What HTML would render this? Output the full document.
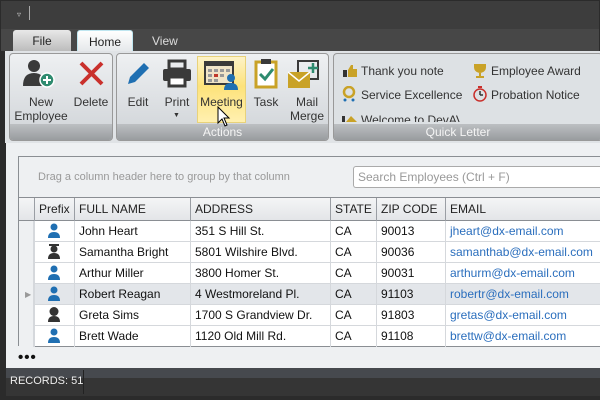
<!DOCTYPE html><html><head><style>
*{margin:0;padding:0;box-sizing:border-box}
body{width:600px;height:400px;overflow:hidden;background:#2b2b2b;font-family:"Liberation Sans",sans-serif;position:relative}
.a{position:absolute}
.t{font-size:12px;color:#222;white-space:nowrap}
.lbl{position:absolute;font-size:12px;color:#333;text-align:center;line-height:14px}
.row{position:absolute;left:19px;width:581px;height:21px;border-bottom:1px solid #d5d8dc;background:#fff;font-size:12px;color:#111}
.row div{position:absolute;top:0;height:21px;line-height:21px;border-left:1px solid #d5d8dc;padding-left:4px;white-space:nowrap}
.hd div{position:absolute;top:0;height:23px;line-height:23px;border-left:1px solid #9a9ea4;padding-left:4px;font-size:12px;color:#222}
.em{color:#2a6ebd}
</style></head><body>
<div class="a" style="left:1px;top:1px;width:598px;height:28px;background:#3d3d3d"></div>
<div class="a" style="left:17px;top:10px;color:#ccc;font-size:8px">▿</div>
<div class="a" style="left:29px;top:6px;width:1px;height:14px;background:#aaa"></div>
<div class="a" style="left:1px;top:29px;width:598px;height:22px;background:#474747"></div>
<div class="a" style="left:13px;top:30px;width:58px;height:21px;background:linear-gradient(#e8e8e8,#bcbcbc);border-radius:3px 3px 0 0;text-align:center;font-size:12px;line-height:22px;color:#222">File</div>
<div class="a" style="left:77px;top:30px;width:56px;height:22px;background:linear-gradient(#fff,#e4e7ea);border:1px solid #bfe6f0;border-bottom:none;border-radius:3px 3px 0 0;text-align:center;font-size:12px;line-height:22px;color:#222">Home</div>
<div class="a" style="left:152px;top:34px;font-size:12px;color:#ddd">View</div>
<div class="a" style="left:5px;top:51px;width:595px;height:92px;background:#e0e3e6"></div>
<div class="a" style="left:9px;top:53px;width:104px;height:88px;border:1px solid #999;border-radius:4px;background:linear-gradient(#eef0f2,#cfd3d7);overflow:hidden"><div class="a" style="left:0;bottom:0;width:100%;height:16px;background:linear-gradient(#bcbfc2,#999c9f)"></div></div>
<div class="a" style="left:116px;top:53px;width:213px;height:88px;border:1px solid #999;border-radius:4px;background:linear-gradient(#eef0f2,#cfd3d7);overflow:hidden"><div class="a" style="left:0;bottom:0;width:100%;height:16px;background:linear-gradient(#bcbfc2,#999c9f);color:#f4f4f4;font-size:12px;text-align:center;line-height:16px">Actions</div></div>
<div class="a" style="left:333px;top:53px;width:270px;height:88px;border:1px solid #999;border-radius:4px;background:#dde1e4;overflow:hidden"><div class="a" style="left:0;bottom:0;width:100%;height:16px;background:linear-gradient(#bcbfc2,#999c9f);color:#f4f4f4;font-size:12px;text-align:center;line-height:16px;padding-right:20px">Quick Letter</div></div>
<div class="a" style="left:197px;top:56px;width:49px;height:67px;border:1px solid #e8d27a;background:linear-gradient(#fdf3c8,#fde27a 45%,#fff0b0)"></div>
<svg class="a" style="left:20px;top:58px" width="40" height="32"><circle cx="14" cy="8" r="6" fill="#3a3a3a"/><path d="M3 28 Q3 15 14 15 Q25 15 25 28Z" fill="#3a3a3a"/><circle cx="27" cy="22" r="7" fill="#2e8b6f" stroke="#fff" stroke-width="1.5"/><path d="M27 18v8M23 22h8" stroke="#fff" stroke-width="2"/></svg>
<svg class="a" style="left:78px;top:60px" width="28" height="28"><path d="M3 3L24 24M24 3L3 24" stroke="#c9302c" stroke-width="4"/></svg>
<svg class="a" style="left:124px;top:60px" width="28" height="28"><path d="M4 24L6 17L20 3L25 8L11 22Z" fill="#1f6fb2"/></svg>
<svg class="a" style="left:162px;top:59px" width="30" height="30"><rect x="7" y="2" width="16" height="8" fill="none" stroke="#3a3a3a" stroke-width="3"/><rect x="1" y="10" width="28" height="12" rx="2" fill="#3a3a3a"/><rect x="7" y="18" width="16" height="9" fill="#fff" stroke="#3a3a3a" stroke-width="3"/></svg>
<svg class="a" style="left:204px;top:60px" width="34" height="30"><rect x="1" y="2" width="28" height="22" fill="#f0e4c8" stroke="#3a3a3a" stroke-width="2"/><rect x="1" y="2" width="28" height="4" fill="#3a3a3a"/><g fill="#999"><rect x="4" y="9" width="4" height="3"/><rect x="10" y="9" width="4" height="3"/><rect x="16" y="9" width="4" height="3"/><rect x="22" y="9" width="4" height="3"/><rect x="4" y="14" width="4" height="3"/><rect x="16" y="14" width="4" height="3"/><rect x="4" y="19" width="4" height="3"/><rect x="10" y="19" width="4" height="3"/></g><rect x="10" y="14" width="4" height="3" fill="#c0392b"/><circle cx="27" cy="18" r="4" fill="#1f6fb2"/><path d="M20 30Q20 23 27 23Q34 23 34 30Z" fill="#1f6fb2"/></svg>
<svg class="a" style="left:253px;top:58px" width="28" height="32"><rect x="3" y="4" width="20" height="25" fill="#fff" stroke="#c9a227" stroke-width="3"/><rect x="8" y="1" width="10" height="5" fill="#3a3a3a"/><path d="M7 16L12 21L20 11" stroke="#2e8b6f" stroke-width="3" fill="none"/></svg>
<svg class="a" style="left:288px;top:60px" width="34" height="30"><rect x="10" y="1" width="20" height="18" fill="none" stroke="#3a3a3a" stroke-width="2"/><rect x="0" y="12" width="22" height="16" fill="#c9a227"/><path d="M0 12L11 21L22 12" stroke="#fff" stroke-width="1.5" fill="none"/><path d="M25 3v10M20 8h10" stroke="#2e8b6f" stroke-width="2.5"/></svg>
<div class="lbl" style="left:12px;top:95px;width:58px">New<br>Employee</div>
<div class="lbl" style="left:72px;top:95px;width:38px">Delete</div>
<div class="lbl" style="left:123px;top:95px;width:30px">Edit</div>
<div class="lbl" style="left:160px;top:95px;width:34px">Print</div>
<div class="a" style="left:173px;top:112px;font-size:7px;color:#333">▼</div>
<div class="lbl" style="left:197px;top:95px;width:49px">Meeting</div>
<div class="lbl" style="left:250px;top:95px;width:32px">Task</div>
<div class="lbl" style="left:288px;top:95px;width:38px">Mail<br>Merge</div>
<svg class="a" style="left:217px;top:106px" width="14" height="22"><path d="M1 1V17L5 13L8 20L10 19L7 12H12Z" fill="#fff" stroke="#000"/></svg>
<div class="a t" style="left:361px;top:64px;color:#333">Thank you note</div>
<div class="a t" style="left:361px;top:88px;color:#333">Service Excellence</div>
<div class="a" style="left:340px;top:112px;width:120px;height:10px;overflow:hidden"><div class="a t" style="left:21px;top:1px;color:#333">Welcome to DevAV</div><svg class="a" style="left:2px;top:2px" width="16" height="10"><rect x="0" y="2" width="3" height="8" fill="#333"/><path d="M4 8L9 2L15 8Z" fill="#c9a227"/></svg></div>
<div class="a t" style="left:491px;top:64px;color:#333">Employee Award</div>
<div class="a t" style="left:491px;top:88px;color:#333">Probation Notice</div>
<svg class="a" style="left:342px;top:64px" width="16" height="14"><rect x="1" y="6" width="4" height="7" fill="#333"/><path d="M6 6L9 1H11V5H15V13H6Z" fill="#c9a227"/></svg>
<svg class="a" style="left:342px;top:86px" width="16" height="16"><circle cx="7" cy="6" r="5" fill="none" stroke="#c9a227" stroke-width="2.5"/><circle cx="3" cy="14" r="1.5" fill="#1f6fb2"/><circle cx="11" cy="14" r="1.5" fill="#1f6fb2"/></svg>
<svg class="a" style="left:472px;top:63px" width="16" height="15"><path d="M2 1H14V4Q14 9 8 10Q2 9 2 4Z" fill="#c9a227"/><rect x="7" y="10" width="2" height="3" fill="#c9a227"/><rect x="4" y="13" width="8" height="2" fill="#c9a227"/></svg>
<svg class="a" style="left:472px;top:86px" width="16" height="16"><circle cx="8" cy="9" r="6" fill="none" stroke="#c9302c" stroke-width="1.5"/><path d="M8 9V5M8 9H11" stroke="#333" stroke-width="1.5"/><rect x="6" y="0" width="4" height="2" fill="#c9302c"/></svg>
<div class="a" style="left:6px;top:143px;width:594px;height:225px;background:#eef0f2"></div>
<div class="a" style="left:18px;top:156px;width:582px;height:190px;border:1px solid #8a8e93;border-right:none;background:#eef0f2"></div>
<div class="a" style="left:38px;top:171px;font-size:11px;color:#999">Drag a column header here to group by that column</div>
<div class="a" style="left:353px;top:166px;width:247px;height:22px;border:1px solid #aaa;border-right:none;border-radius:3px 0 0 3px;background:#fff;font-size:12px;color:#999;line-height:20px;padding-left:4px">Search Employees (Ctrl + F)</div>
<div class="a hd" style="left:19px;top:197px;width:581px;height:24px;background:linear-gradient(#f4f5f6,#e3e5e8);border-top:1px solid #8a8e93;border-bottom:1px solid #8a8e93">
<div style="left:15px">Prefix</div><div style="left:55px">FULL NAME</div><div style="left:171px">ADDRESS</div><div style="left:311px">STATE</div><div style="left:357px">ZIP CODE</div><div style="left:426px">EMAIL</div></div>
<div class="row" style="top:221px"><div style="left:15px;width:40px"></div><div style="left:55px">John Heart</div><div style="left:171px">351 S Hill St.</div><div style="left:311px">CA</div><div style="left:357px">90013</div><div style="left:426px" class="em">jheart@dx-email.com</div></div>
<div class="row" style="top:242px"><div style="left:15px;width:40px"></div><div style="left:55px">Samantha Bright</div><div style="left:171px">5801 Wilshire Blvd.</div><div style="left:311px">CA</div><div style="left:357px">90036</div><div style="left:426px" class="em">samanthab@dx-email.com</div></div>
<div class="row" style="top:263px"><div style="left:15px;width:40px"></div><div style="left:55px">Arthur Miller</div><div style="left:171px">3800 Homer St.</div><div style="left:311px">CA</div><div style="left:357px">90031</div><div style="left:426px" class="em">arthurm@dx-email.com</div></div>
<div class="row" style="top:284px;background:#e3e6ea"><div style="left:15px;width:40px"></div><div style="left:55px">Robert Reagan</div><div style="left:171px">4 Westmoreland Pl.</div><div style="left:311px">CA</div><div style="left:357px">91103</div><div style="left:426px" class="em">robertr@dx-email.com</div></div>
<div class="row" style="top:305px"><div style="left:15px;width:40px"></div><div style="left:55px">Greta Sims</div><div style="left:171px">1700 S Grandview Dr.</div><div style="left:311px">CA</div><div style="left:357px">91803</div><div style="left:426px" class="em">gretas@dx-email.com</div></div>
<div class="row" style="top:326px;border-bottom:1px solid #8a8e93"><div style="left:15px;width:40px"></div><div style="left:55px">Brett Wade</div><div style="left:171px">1120 Old Mill Rd.</div><div style="left:311px">CA</div><div style="left:357px">91108</div><div style="left:426px" class="em">brettw@dx-email.com</div></div>
<div class="a" style="left:19px;top:221px;width:15px;height:126px;background:#eef0f2;border-right:1px solid #d5d8dc"></div>
<div class="a" style="left:25px;top:290px;font-size:8px;color:#999">▶</div>
<svg class="a" style="left:47px;top:223px" width="14" height="120">
<g fill="#1f6fb2"><circle cx="7" cy="4" r="3.5"/><path d="M1 15Q1 9 7 9Q13 9 13 15Z"/></g>
<g fill="#333" transform="translate(0,21)"><rect x="2" y="0" width="10" height="2"/><circle cx="7" cy="5" r="3.5"/><path d="M1 15Q1 9 7 9Q13 9 13 15Z"/></g>
<g fill="#1f6fb2" transform="translate(0,42)"><circle cx="7" cy="4" r="3.5"/><path d="M1 15Q1 9 7 9Q13 9 13 15Z"/></g>
<g fill="#1f6fb2" transform="translate(0,63)"><circle cx="7" cy="4" r="3.5"/><path d="M1 15Q1 9 7 9Q13 9 13 15Z"/></g>
<g fill="#333" transform="translate(0,84)"><circle cx="7" cy="4.5" r="4.5"/><path d="M1 15Q1 9 7 9Q13 9 13 15Z"/></g>
<g fill="#1f6fb2" transform="translate(0,105)"><circle cx="7" cy="4" r="3.5"/><path d="M1 15Q1 9 7 9Q13 9 13 15Z"/></g>
</svg>
<div class="a" style="left:18px;top:349px;font-size:15px;font-weight:bold;color:#111;letter-spacing:1px">•••</div>
<div class="a" style="left:6px;top:368px;width:594px;height:10px;background:#46494e"></div>
<div class="a" style="left:6px;top:378px;width:594px;height:18px;background:#353535"></div>
<div class="a" style="left:10px;top:375px;font-size:11px;color:#eee">RECORDS: 51</div>
<div class="a" style="left:83px;top:370px;width:1px;height:24px;background:#222"></div>
</body></html>
